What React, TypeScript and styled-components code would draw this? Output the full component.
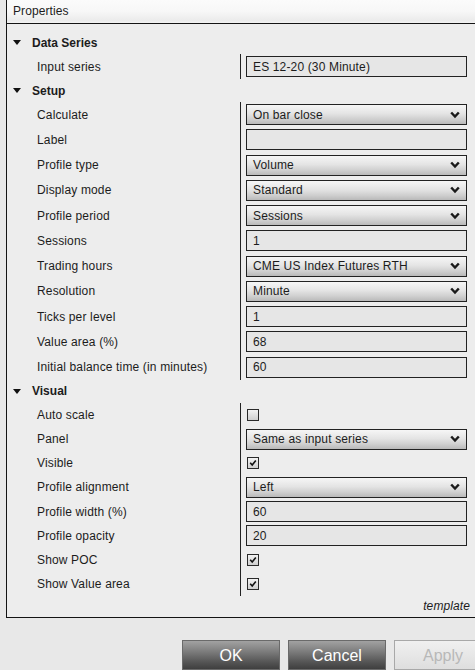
import React from "react";
import styled, { createGlobalStyle } from "styled-components";

const Global = createGlobalStyle`
  html, body { margin: 0; padding: 0; }
  body {
    background: #e8e8e8;
    font-family: "Liberation Sans", Arial, sans-serif;
    font-size: 12px;
    color: #1c1c1c;
    width: 475px;
    height: 670px;
    overflow: hidden;
  }
`;

const Page = styled.div`
  width: 475px;
  height: 670px;
  display: flex;
  flex-direction: column;
`;

const Frame = styled.div`
  margin-left: 6px;
  width: 469px;
  height: 620px;
  border-left: 1px solid #141414;
  border-bottom: 1px solid #141414;
  background: #ededed;
  display: flex;
  flex-direction: column;
`;

const TitleBar = styled.div`
  height: 24px;
  box-sizing: border-box;
  border-bottom: 1px solid #141414;
  background: linear-gradient(#fbfbfb 0%, #f7f7f7 50%, #ebebeb 90%, #f3f3f3 100%);
  padding-left: 6px;
  display: flex;
  align-items: center;
  padding-bottom: 2px;
  letter-spacing: 0.1px;
`;

const Body = styled.div`
  padding-top: 7px;
  display: flex;
  flex-direction: column;
  flex: 1;
`;

const SectionHead = styled.div`
  height: 23px;
  display: flex;
  align-items: center;
  font-weight: bold;
  padding-left: 6px;
  gap: 11px;
`;

const Tri = styled.span`
  width: 0;
  height: 0;
  border-left: 4px solid transparent;
  border-right: 4px solid transparent;
  border-top: 5px solid #111;
`;

const Row = styled.div<{ $h: number }>`
  height: ${(p) => p.$h}px;
  display: grid;
  grid-template-columns: 233px 1px 221px;
`;

const Label = styled.div`
  display: flex;
  align-items: center;
  padding-left: 30px;
  letter-spacing: 0.15px;
  white-space: nowrap;
`;

const Divider = styled.div`
  background: #222;
`;

const Value = styled.div`
  display: flex;
  align-items: center;
  margin-left: 5px;
  width: 221px;
`;

const TextBox = styled.div`
  box-sizing: border-box;
  width: 221px;
  height: 21px;
  border: 1px solid #222;
  background: #e6e6e6;
  display: flex;
  align-items: center;
  padding-left: 6px;
  letter-spacing: 0.15px;
`;

const Select = styled.div`
  box-sizing: border-box;
  width: 221px;
  height: 21px;
  border: 1px solid #222;
  background: linear-gradient(#f6f6f6 0%, #e4e4e4 45%, #cfcfcf 75%, #b9b9b9 100%);
  display: flex;
  align-items: center;
  justify-content: space-between;
  padding: 0 6px;
  letter-spacing: 0.15px;
`;

const Check = styled.div`
  box-sizing: border-box;
  width: 12px;
  height: 12px;
  margin-left: 1px;
  border: 1px solid #2a2a2a;
  background: linear-gradient(#f2f2f2, #cfcfcf);
  display: flex;
  align-items: center;
  justify-content: center;
`;

const TemplateRow = styled.div`
  height: 22px;
  margin-top: -1px;
  display: flex;
  align-items: center;
  justify-content: flex-end;
  padding-right: 6px;
  font-style: italic;
  letter-spacing: 0.1px;
`;

const ButtonBar = styled.div`
  margin-top: 22px;
  display: flex;
  gap: 8px;
  padding-left: 182px;
`;

const Button = styled.div<{ $disabled?: boolean }>`
  box-sizing: border-box;
  width: 98px;
  height: 30px;
  flex-shrink: 0;
  display: flex;
  align-items: center;
  justify-content: center;
  font-size: 16px;
  padding-top: 1px;
  color: ${(p) => (p.$disabled ? "#b8b8b8" : "#ffffff")};
  border: 1px solid ${(p) => (p.$disabled ? "#a8a8a8" : "#6a6a6a")};
  background: ${(p) =>
    p.$disabled
      ? "linear-gradient(#f0f0f0, #dedede)"
      : "linear-gradient(#a2a2a2 0%, #7a7a7a 40%, #555555 75%, #3f3f3f 100%)"};
`;

const Chevron = () => (
  <svg width="10" height="8" viewBox="0 0 10 8">
    <polyline points="1.2,1.5 5,5.6 8.8,1.5" fill="none" stroke="#1a1a1a" strokeWidth="2.4" />
  </svg>
);

const Tick = () => (
  <svg width="8" height="8" viewBox="0 0 8 8">
    <polyline points="1.2,3.8 3.2,6 6.8,1.6" fill="none" stroke="#111" strokeWidth="1.6" />
  </svg>
);

type Prop =
  | { label: string; kind: "text"; value: string }
  | { label: string; kind: "select"; value: string }
  | { label: string; kind: "check"; value: boolean };

type Section = { title: string; rowH: number; props: Prop[] };

const sections: Section[] = [
  {
    title: "Data Series",
    rowH: 25,
    props: [{ label: "Input series", kind: "text", value: "ES 12-20 (30 Minute)" }],
  },
  {
    title: "Setup",
    rowH: 25.25,
    props: [
      { label: "Calculate", kind: "select", value: "On bar close" },
      { label: "Label", kind: "text", value: "" },
      { label: "Profile type", kind: "select", value: "Volume" },
      { label: "Display mode", kind: "select", value: "Standard" },
      { label: "Profile period", kind: "select", value: "Sessions" },
      { label: "Sessions", kind: "text", value: "1" },
      { label: "Trading hours", kind: "select", value: "CME US Index Futures RTH" },
      { label: "Resolution", kind: "select", value: "Minute" },
      { label: "Ticks per level", kind: "text", value: "1" },
      { label: "Value area (%)", kind: "text", value: "68" },
      { label: "Initial balance time (in minutes)", kind: "text", value: "60" },
    ],
  },
  {
    title: "Visual",
    rowH: 24.2,
    props: [
      { label: "Auto scale", kind: "check", value: false },
      { label: "Panel", kind: "select", value: "Same as input series" },
      { label: "Visible", kind: "check", value: true },
      { label: "Profile alignment", kind: "select", value: "Left" },
      { label: "Profile width (%)", kind: "text", value: "60" },
      { label: "Profile opacity", kind: "text", value: "20" },
      { label: "Show POC", kind: "check", value: true },
      { label: "Show Value area", kind: "check", value: true },
    ],
  },
];

const Editor = ({ p }: { p: Prop }) => {
  if (p.kind === "text") return <TextBox>{p.value}</TextBox>;
  if (p.kind === "select")
    return (
      <Select>
        <span>{p.value}</span>
        <Chevron />
      </Select>
    );
  return <Check>{p.value ? <Tick /> : null}</Check>;
};

export default function App() {
  return (
    <Page>
      <Global />
      <Frame>
        <TitleBar>Properties</TitleBar>
        <Body>
          {sections.map((s) => (
            <React.Fragment key={s.title}>
              <SectionHead>
                <Tri />
                <span>{s.title}</span>
              </SectionHead>
              {s.props.map((p) => (
                <Row key={p.label} $h={s.rowH}>
                  <Label>{p.label}</Label>
                  <Divider />
                  <Value>
                    <Editor p={p} />
                  </Value>
                </Row>
              ))}
            </React.Fragment>
          ))}
          <TemplateRow>template</TemplateRow>
        </Body>
      </Frame>
      <ButtonBar>
        <Button>OK</Button>
        <Button>Cancel</Button>
        <Button $disabled>Apply</Button>
      </ButtonBar>
    </Page>
  );
}
